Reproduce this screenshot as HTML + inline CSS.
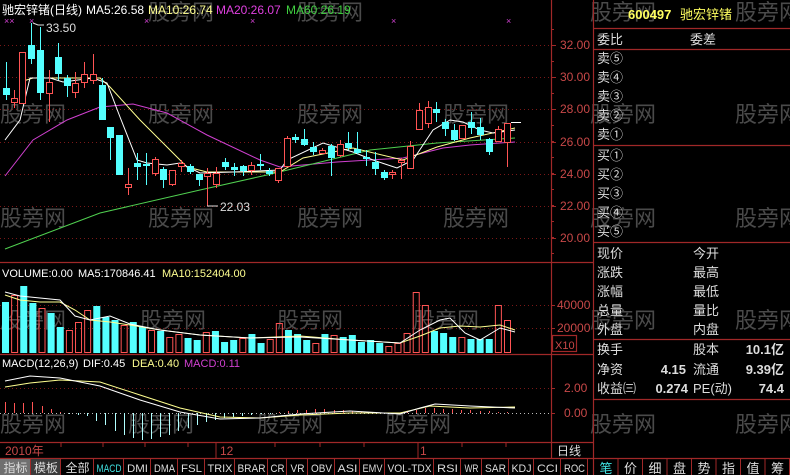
<!DOCTYPE html>
<html><head><meta charset="utf-8"><style>
body{margin:0;background:#000;width:790px;height:475px;overflow:hidden;font-family:"Liberation Sans","Noto Sans CJK SC",sans-serif;}
svg{position:absolute;left:0;top:0}
text{font-family:"Liberation Sans","Noto Sans CJK SC",sans-serif}
</style></head><body>
<svg id="s" width="790" height="475" xmlns="http://www.w3.org/2000/svg">
<rect width="790" height="475" fill="#000"/>
<g id="wm" fill="#4a4a4a" font-size="22"></g>
<g id="grid" stroke="#7a1818" stroke-dasharray="1,3" stroke-width="1"></g>
<g id="ma"></g>
<g id="c"></g>
<g id="v"></g>
<g id="m"></g>
<g stroke="#a02828" stroke-width="1.2" fill="none">
<line x1="551.5" y1="0" x2="551.5" y2="458"/>
<line x1="593.5" y1="0" x2="593.5" y2="475"/>
<line x1="0" y1="262.5" x2="593" y2="262.5"/>
<line x1="0" y1="354.5" x2="593" y2="354.5"/>
<line x1="0" y1="442.5" x2="593" y2="442.5"/>
<line x1="0" y1="458.5" x2="790" y2="458.5"/>
<line x1="593" y1="28.5" x2="790" y2="28.5"/>
<line x1="593" y1="49.5" x2="790" y2="49.5"/>
<line x1="593" y1="145.5" x2="790" y2="145.5"/>
<line x1="593" y1="242.5" x2="790" y2="242.5"/>
<line x1="593" y1="339.5" x2="790" y2="339.5"/>
<line x1="593" y1="399.5" x2="790" y2="399.5"/>
<rect x="552.5" y="335.5" width="24" height="16"/>
</g>
<g id="ax" fill="#c84848" font-size="12"></g>
<text x="2" y="14" font-size="12" fill="#fff">驰宏锌锗(日线)</text>
<text x="86" y="14" font-size="12" fill="#fff">MA5:26.58</text>
<text x="148" y="14" font-size="12" fill="#ffff90">MA10:26.74</text>
<text x="216" y="14" font-size="12" fill="#e040e0">MA20:26.07</text>
<text x="286" y="14" font-size="12" fill="#40d040">MA60:26.19</text>
<g fill="#d040d0" font-size="9"><text x="4" y="24">××</text><text x="29" y="24">×</text><text x="144" y="24">×</text><text x="250" y="24">×</text><text x="391" y="24">×</text><text x="506" y="24">×</text></g>
<text x="46" y="32" font-size="12" fill="#ddd">33.50</text>
<path d="M33 23 L38 25 L44 25" stroke="#ddd" fill="none"/>
<text x="220" y="211" font-size="12" fill="#ddd">22.03</text>
<path d="M207 206 L218 206" stroke="#ddd" fill="none"/>
<text x="2" y="277" font-size="11" fill="#fff">VOLUME:0.00</text>
<text x="78" y="277" font-size="11" fill="#fff">MA5:170846.41</text>
<text x="162" y="277" font-size="11" fill="#ffff90">MA10:152404.00</text>
<text x="2" y="367" font-size="11" fill="#fff">MACD(12,26,9)</text>
<text x="83" y="367" font-size="11" fill="#fff">DIF:0.45</text>
<text x="132" y="367" font-size="11" fill="#ffff90">DEA:0.40</text>
<text x="184" y="367" font-size="11" fill="#d040d0">MACD:0.11</text>
<g fill="#c84848" font-size="12"><text x="5" y="455">2010年</text><text x="220" y="455">12</text><text x="420" y="455">1</text></g>
<g stroke="#a02828"><line x1="61" y1="443" x2="61" y2="447"/><line x1="103" y1="443" x2="103" y2="447"/><line x1="145" y1="443" x2="145" y2="447"/><line x1="188" y1="443" x2="188" y2="447"/><line x1="216" y1="443" x2="216" y2="458"/><line x1="275" y1="443" x2="275" y2="447"/><line x1="320" y1="443" x2="320" y2="447"/><line x1="364" y1="443" x2="364" y2="447"/><line x1="418" y1="443" x2="418" y2="458"/><line x1="462" y1="443" x2="462" y2="447"/><line x1="506" y1="443" x2="506" y2="447"/></g>
<text x="557" y="455" font-size="12" fill="#ddd">日线</text>
<text x="555" y="349" font-size="11" fill="#c84848">X10</text>
<text x="628" y="19" font-size="13" fill="#ffff60" font-weight="bold">600497</text>
<text x="680" y="19" font-size="13" fill="#ffff60">驰宏锌锗</text>
<g fill="#ddd" font-size="13" id="rp"></g>
<g id="tabs"></g>
</svg>
<script>
var NS="http://www.w3.org/2000/svg";
function el(p,t,a,txt){var e=document.createElementNS(NS,t);for(var k in a)e.setAttribute(k,a[k]);if(txt!=null)e.textContent=txt;document.getElementById(p).appendChild(e);return e;}
var wms=[[148,20],[297,20],[590,20],[735,20],[0,122],[148,122],[297,122],[443,122],[590,122],[735,122],[0,226],[148,226],[297,226],[443,226],[590,226],[735,226],[0,328],[140,328],[277,328],[413,328],[590,328],[735,328],[0,432],[128,432],[257,432],[385,432],[590,432],[735,432]];
wms.forEach(function(w){el("wm","text",{x:w[0],y:w[1]},"股旁网");});
[45,77,109,142,174,206,238].forEach(function(y){el("grid","line",{x1:0,x2:551,y1:y+.5,y2:y+.5});});
[305,328].forEach(function(y){el("grid","line",{x1:0,x2:551,y1:y+.5,y2:y+.5});});
[388,413].forEach(function(y){el("grid","line",{x1:0,x2:551,y1:y+.5,y2:y+.5,stroke:y==413?"#bbb":"#7a1818"});});
var labs=[["32.00",45],["30.00",77],["28.00",109],["26.00",142],["24.00",174],["22.00",206],["20.00",238]];
labs.forEach(function(l){el("ax","text",{x:560,y:l[1]+4},l[0]);el("ax","line",{x1:551,x2:556,y1:l[1]+.5,y2:l[1]+.5,stroke:"#a02828"});});
for(var y=29;y<262;y+=16)el("ax","line",{x1:551,x2:554,y1:y+.5,y2:y+.5,stroke:"#a02828"});
[["40000",305],["20000",328],["2.00",388],["0.00",413]].forEach(function(l){el("ax","text",{x:l[0].length>4?557:564,y:l[1]+4},l[0]);el("ax","line",{x1:551,x2:555,y1:l[1]+.5,y2:l[1]+.5,stroke:"#a02828"});});
var C=[[6,88,95,62,100,'c'],[14,98,102,90,108,'r'],[22,52,103,52,103,'r'],[31,45,59,23,64,'c'],[40,50,93,27,100,'c'],[49,82,93,70,122,'r'],[58,57,74,43,80,'c'],[67,78,86,75,97,'c'],[75,83,92,72,98,'r'],[84,74,82,62,88,'r'],[93,74,80,54,84,'r'],[102,85,120,78,120,'c'],[110,127,138,127,160,'c'],[119,135,175,135,175,'c'],[128,184,187,168,195,'r'],[137,163,167,153,180,'c'],[146,164,166,153,185,'c'],[155,159,173,157,176,'r'],[163,169,180,167,188,'c'],[172,170,184,170,186,'r'],[181,163,166,160,172,'r'],[190,166,172,164,174,'c'],[199,174,180,174,186,'c'],[207,173,176,168,206,'r'],[216,173,184,167,188,'r'],[225,162,167,158,170,'c'],[234,167,170,163,176,'c'],[243,166,171,165,176,'c'],[251,165,170,162,175,'r'],[260,164,166,154,170,'c'],[269,171,174,168,176,'c'],[278,168,180,168,183,'r'],[287,138,166,136,166,'r'],[295,137,140,134,143,'c'],[304,139,145,129,146,'c'],[313,147,152,142,155,'c'],[322,150,153,148,154,'r'],[331,146,158,144,176,'c'],[340,144,155,140,157,'r'],[348,143,148,132,150,'c'],[357,149,153,132,154,'c'],[366,157,159,150,166,'c'],[375,162,169,152,175,'c'],[384,172,178,170,180,'c'],[392,172,174,170,179,'r'],[401,160,162,158,179,'r'],[410,146,168,141,168,'r'],[419,110,129,103,129,'r'],[428,107,123,101,128,'r'],[436,109,113,102,122,'c'],[445,122,129,119,136,'c'],[454,130,140,124,141,'c'],[462,125,138,125,139,'r'],[471,122,128,112,134,'c'],[480,127,135,118,140,'c'],[489,139,152,138,155,'c'],[498,129,141,126,142,'r'],[507,123,142,123,167,'r']];
C.forEach(function(k){var col=k[5]=='c'?"#54ffff":"#ff5454";
el("c","line",{x1:k[0]+.5,x2:k[0]+.5,y1:k[3],y2:k[4],stroke:col});
if(k[5]=='c')el("c","rect",{x:k[0]-3,y:k[1],width:7,height:Math.max(1,k[2]-k[1]),fill:col});
else el("c","rect",{x:k[0]-2.5,y:k[1]+.5,width:6,height:Math.max(1,k[2]-k[1]),fill:"#000",stroke:col});});
el("c","line",{x1:511,x2:521,y1:122.5,y2:122.5,stroke:"#fff"});
function pl(g,pts,col){el(g,"polyline",{points:pts,fill:"none",stroke:col,"stroke-width":1});}
pl("ma","5,176 33,140 67,120 100,107 133,104 167,113 207,135 260,160 280,167 337,162 403,158 443,148 470,145 515,142","#d040d0");
pl("ma","5,249 100,213 200,190 267,175 300,167 370,150 437,143 515,138","#50d050");
pl("ma","20,82 33,78 100,78 110,87 140,120 167,147 187,167 207,172 280,172 303,158 353,148 403,160 437,147 470,138 515,128","#ffff90");
pl("ma","5,140 20,120 30,78 50,78 63,82 93,78 107,83 120,117 137,160 147,163 167,165 180,163 200,173 233,172 280,170 287,160 323,143 353,152 373,160 397,168 413,160 433,130 450,120 463,122 480,130 493,133 515,130","#fff");
var V=[[302,'c'],[295,'r'],[286,'c'],[303,'c'],[308,'r'],[313,'c'],[327,'c'],[330,'r'],[322,'r'],[310,'r'],[306,'c'],[317,'c'],[320,'c'],[325,'r'],[322,'c'],[327,'c'],[330,'r'],[331,'c'],[337,'r'],[334,'r'],[338,'c'],[340,'c'],[332,'r'],[331,'c'],[342,'c'],[340,'c'],[338,'r'],[334,'c'],[343,'c'],[339,'r'],[323,'r'],[330,'c'],[334,'c'],[340,'c'],[343,'r'],[334,'c'],[335,'r'],[337,'c'],[335,'c'],[342,'c'],[340,'c'],[343,'c'],[346,'r'],[343,'r'],[333,'r'],[292,'r'],[305,'r'],[331,'c'],[333,'c'],[337,'c'],[337,'r'],[339,'c'],[339,'c'],[339,'c'],[305,'r'],[320,'r']];
V.forEach(function(b,i){var x=5+i*(502/55);if(b[1]=='c')el("v","rect",{x:x-3,y:b[0],width:7,height:353-b[0],fill:"#54ffff"});else el("v","rect",{x:x-2.5,y:b[0]+.5,width:6,height:352-b[0],fill:"none",stroke:"#ff5454"});});
pl("v","5,295 20,300 40,302 60,302 75,310 90,320 110,322 130,325 160,330 200,335 250,338 300,336 350,340 400,343 420,336 440,328 460,326 480,327 500,325 515,330","#ffff90");
pl("v","5,292 20,296 40,298 60,300 75,316 90,320 110,316 130,324 160,330 200,335 250,338 300,337 350,340 400,343 420,330 440,320 450,318 465,333 480,340 500,328 515,332","#fff");
// macd histogram
var H=[11,10,10,11,7,4,1,-1,-2,-3,-8,-12,-18,-22,-25,-27,-26,-24,-22,-18,-15,-12,-9,-7,-5,-4,-3,-2,-1,-1,1,2,3,3,4,4,3,3,2,1,1,0,-1,-1,1,3,5,5,4,4,3,3,2,2,1,1];
H.forEach(function(h,i){var x=Math.round(5+i*(502/55))+.5;if(h==0)return;
 el("m","line",{x1:x,x2:x,y1:413,y2:413-h,stroke:h>0?"#ff5454":"#b0ffff"});});
pl("m","5,387 30,383 60,380 100,382 140,395 180,408 220,417 260,418 300,415 350,413 400,413 430,406 470,408 515,407","#ffff90");
pl("m","5,381 30,376 60,378 100,386 140,400 180,412 220,419 260,418 300,414 350,411 400,414 420,408 435,404 470,406 515,408","#fff");
var R=[["委比",597,44],["委差",690,44],["卖⑤",597,63],["卖④",597,82],["卖③",597,101],["卖②",597,120],["卖①",597,139],["买①",597,160],["买②",597,179],["买③",597,198],["买④",597,217],["买⑤",597,236],["现价",597,258],["今开",693,258],["涨跌",597,277],["最高",693,277],["涨幅",597,296],["最低",693,296],["总量",597,315],["量比",693,315],["外盘",597,334],["内盘",693,334],["换手",597,354],["股本",693,354],["净资",597,374],["流通",693,374],["收益㈢",597,393],["PE(动)",693,393]];
R.forEach(function(r){el("rp","text",{x:r[1],y:r[2]},r[0]);});
[["10.1亿",784,354],["4.15",686,374],["9.39亿",784,374],["0.274",688,393],["74.4",784,393]].forEach(function(r){el("rp","text",{x:r[1],y:r[2],"text-anchor":"end","font-weight":"bold"},r[0]);});
var T=[["指标",0,29],["模板",31,59],["全部",61,92],["MACD",94,122],["DMI",124,149],["DMA",151,176],["FSL",178,203],["TRIX",205,233],["BRAR",235,266],["CR",268,285],["VR",287,306],["OBV",308,333],["ASI",335,358],["EMV",360,383],["VOL-TDX",385,432],["RSI",434,459],["WR",461,480],["SAR",482,507],["KDJ",509,532],["CCI",534,559],["ROC",561,586]];
T.forEach(function(t,i){var a=t[1],b=t[2],lat=/[A-Z]/.test(t[0]);
 if(i<2)el("tabs","rect",{x:a,y:459,width:b-a+1,height:16,fill:i==0?"#707070":"#3a3a3a"});
 el("tabs","line",{x1:b+1.5,x2:b+1.5,y1:459,y2:475,stroke:"#a02828"});
 var tx=el("tabs","text",{x:(a+b)/2+1,y:472,"text-anchor":"middle","font-size":lat?"11":"12",fill:i==3?"#40e0e0":"#ddd"},t[0]);
 if(lat){tx.setAttribute("font-family","Liberation Mono");tx.setAttribute("textLength",Math.min(b-a-3,t[0].length*7));tx.setAttribute("lengthAdjust","spacingAndGlyphs");}});
["笔","价","细","盘","势","指","值","筹"].forEach(function(c,i){var x=594+i*24.5;
 el("tabs","text",{x:x+12,y:473,"text-anchor":"middle","font-size":"13",fill:i==0?"#40e0e0":"#ddd"},c);
 el("tabs","line",{x1:x+24,x2:x+24,y1:459,y2:475,stroke:"#a02828"});});
</script>
</body></html>
